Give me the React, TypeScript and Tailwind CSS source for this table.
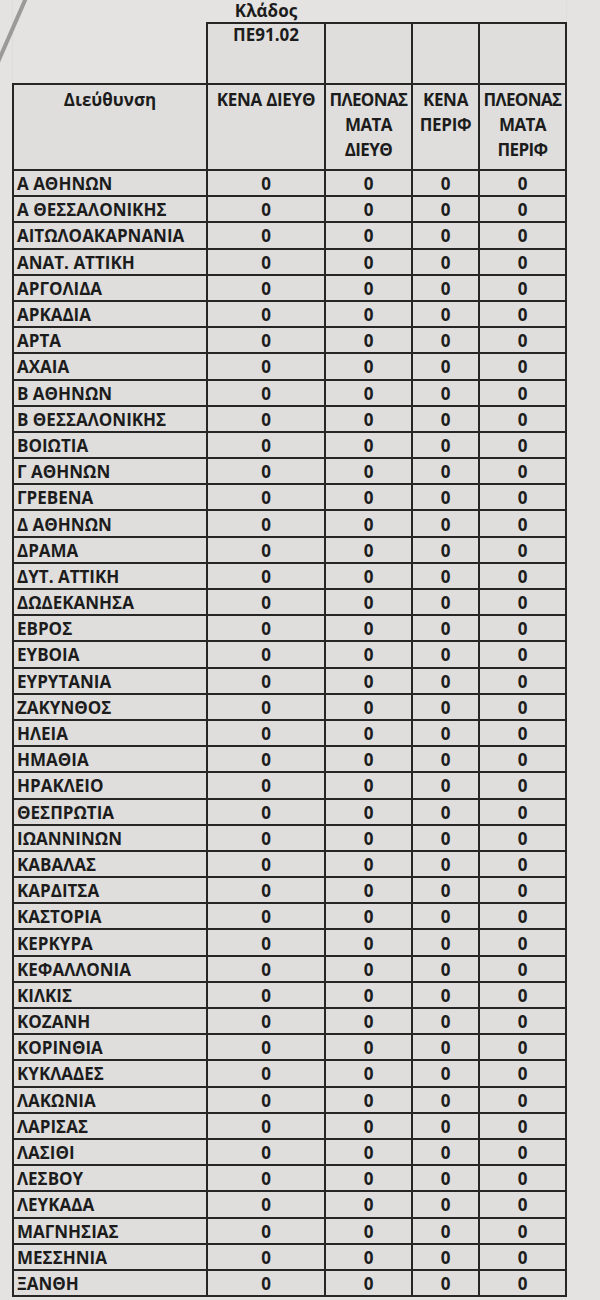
const rows = [
  "Α ΑΘΗΝΩΝ",
  "Α ΘΕΣΣΑΛΟΝΙΚΗΣ",
  "ΑΙΤΩΛΟΑΚΑΡΝΑΝΙΑ",
  "ΑΝΑΤ. ΑΤΤΙΚΗ",
  "ΑΡΓΟΛΙΔΑ",
  "ΑΡΚΑΔΙΑ",
  "ΑΡΤΑ",
  "ΑΧΑΙΑ",
  "Β ΑΘΗΝΩΝ",
  "Β ΘΕΣΣΑΛΟΝΙΚΗΣ",
  "ΒΟΙΩΤΙΑ",
  "Γ ΑΘΗΝΩΝ",
  "ΓΡΕΒΕΝΑ",
  "Δ ΑΘΗΝΩΝ",
  "ΔΡΑΜΑ",
  "ΔΥΤ. ΑΤΤΙΚΗ",
  "ΔΩΔΕΚΑΝΗΣΑ",
  "ΕΒΡΟΣ",
  "ΕΥΒΟΙΑ",
  "ΕΥΡΥΤΑΝΙΑ",
  "ΖΑΚΥΝΘΟΣ",
  "ΗΛΕΙΑ",
  "ΗΜΑΘΙΑ",
  "ΗΡΑΚΛΕΙΟ",
  "ΘΕΣΠΡΩΤΙΑ",
  "ΙΩΑΝΝΙΝΩΝ",
  "ΚΑΒΑΛΑΣ",
  "ΚΑΡΔΙΤΣΑ",
  "ΚΑΣΤΟΡΙΑ",
  "ΚΕΡΚΥΡΑ",
  "ΚΕΦΑΛΛΟΝΙΑ",
  "ΚΙΛΚΙΣ",
  "ΚΟΖΑΝΗ",
  "ΚΟΡΙΝΘΙΑ",
  "ΚΥΚΛΑΔΕΣ",
  "ΛΑΚΩΝΙΑ",
  "ΛΑΡΙΣΑΣ",
  "ΛΑΣΙΘΙ",
  "ΛΕΣΒΟΥ",
  "ΛΕΥΚΑΔΑ",
  "ΜΑΓΝΗΣΙΑΣ",
  "ΜΕΣΣΗΝΙΑ",
  "ΞΑΝΘΗ",
];

const cell = "border-2 border-[#262626]";
const head = `${cell} align-top pt-[2px] text-center font-bold leading-[25px]`;
const num = `${cell} p-0 pt-[2px] text-center leading-[20px]`;

export default function App() {
  return (
    <div className="relative h-[1300px] w-[600px] overflow-hidden bg-[#e4e3e1] pl-[12px] font-['Open_Sans',sans-serif] text-[17px] font-bold text-[#1c1c1c]">
      {/* paper edge streak, top left */}
      <svg className="absolute left-0 top-0" width="40" height="70" viewBox="0 0 40 70">
        <line x1="-2" y1="62" x2="26" y2="-2" stroke="#9a9a9a" strokeWidth="4" />
      </svg>

      <table className="border-collapse bg-[#dfdedc] text-[17px]">
        <colgroup>
          <col className="w-[194px]" />
          <col className="w-[118px]" />
          <col className="w-[87px]" />
          <col className="w-[67px]" />
          <col className="w-[87px]" />
        </colgroup>
        <thead>
          <tr className="h-[22px] bg-[#e4e3e1]">
            <th className="p-0" />
            <th className="p-0 text-center align-bottom font-bold leading-[22px]">Κλάδος</th>
            <th className="p-0" />
            <th className="p-0" />
            <th className="p-0" />
          </tr>
          <tr className="h-[61px]">
            <th className="bg-[#e4e3e1] p-0" />
            <th className={`${cell} p-0 align-top pt-[1px] text-center font-bold leading-[20px]`}>ΠΕ91.02</th>
            <th className={`${cell} p-0`} />
            <th className={`${cell} p-0`} />
            <th className={`${cell} p-0`} />
          </tr>
          <tr className="h-[86px]">
            <th className={`${head} p-0 pt-[2px]`}>Διεύθυνση</th>
            <th className={`${head} p-0 pt-[2px] tracking-[-0.3px]`}>ΚΕΝΑ ΔΙΕΥΘ</th>
            <th className={`${head} p-0 pt-[2px] tracking-[-0.6px]`}>
              ΠΛΕΟΝΑΣ
              <br />
              ΜΑΤΑ
              <br />
              ΔΙΕΥΘ
            </th>
            <th className={`${head} p-0 pt-[2px] tracking-[-0.3px]`}>
              ΚΕΝΑ
              <br />
              ΠΕΡΙΦ
            </th>
            <th className={`${head} p-0 pt-[2px] tracking-[-0.6px]`}>
              ΠΛΕΟΝΑΣ
              <br />
              ΜΑΤΑ
              <br />
              ΠΕΡΙΦ
            </th>
          </tr>
        </thead>
        <tbody>
          {rows.map((name) => (
            <tr key={name} className="h-[26.2px]">
              <td className={`${cell} px-[3px] pt-[2px] leading-[20px] whitespace-nowrap`}>{name}</td>
              <td className={num}>0</td>
              <td className={num}>0</td>
              <td className={num}>0</td>
              <td className={num}>0</td>
            </tr>
          ))}
        </tbody>
      </table>
    </div>
  );
}
